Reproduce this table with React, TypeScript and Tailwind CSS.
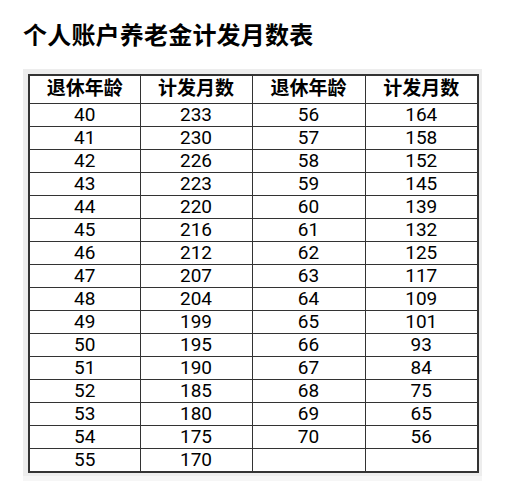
const left = [
  [40, 233], [41, 230], [42, 226], [43, 223], [44, 220], [45, 216], [46, 212], [47, 207],
  [48, 204], [49, 199], [50, 195], [51, 190], [52, 185], [53, 180], [54, 175], [55, 170],
];
const right = [
  [56, 164], [57, 158], [58, 152], [59, 145], [60, 139], [61, 132], [62, 125], [63, 117],
  [64, 109], [65, 101], [66, 93], [67, 84], [68, 75], [69, 65], [70, 56],
];

const font = { fontFamily: "Roboto, 'Noto Sans CJK SC', sans-serif" };

export default function App() {
  const cell = "border border-[#333] text-center p-0";
  return (
    <div className="w-[506px] h-[492px] bg-white" style={font}>
      <h1 className="ml-[23px] pt-[23px] text-[24px] leading-[26px] font-bold text-black tracking-[0.2px]">
        个人账户养老金计发月数表
      </h1>
      <div className="ml-[23px] mt-[20px] w-[459px] bg-[#ededed] p-[5px] pb-[3px] border-b-[5px] border-[#f6f6f6]">
        <table className="w-[449px] table-fixed border-collapse border-2 border-[#333] bg-white text-black">
          <colgroup>
            <col className="w-[111px]" />
            <col className="w-[112px]" />
            <col className="w-[113px]" />
            <col className="w-[113px]" />
          </colgroup>
          <thead>
            <tr className="h-[28px]">
              <th className={`${cell} text-[19px] font-bold leading-[26px]`}>退休年龄</th>
              <th className={`${cell} text-[19px] font-bold leading-[26px]`}>计发月数</th>
              <th className={`${cell} text-[19px] font-bold leading-[26px]`}>退休年龄</th>
              <th className={`${cell} text-[19px] font-bold leading-[26px]`}>计发月数</th>
            </tr>
          </thead>
          <tbody>
            {left.map((l, i) => {
              const r = right[i];
              return (
                <tr key={i} className="h-[23px] text-[19px] leading-[22px]">
                  <td className={cell}>{l[0]}</td>
                  <td className={cell}>{l[1]}</td>
                  <td className={cell}>{r ? r[0] : ""}</td>
                  <td className={cell}>{r ? r[1] : ""}</td>
                </tr>
              );
            })}
          </tbody>
        </table>
      </div>
    </div>
  );
}
